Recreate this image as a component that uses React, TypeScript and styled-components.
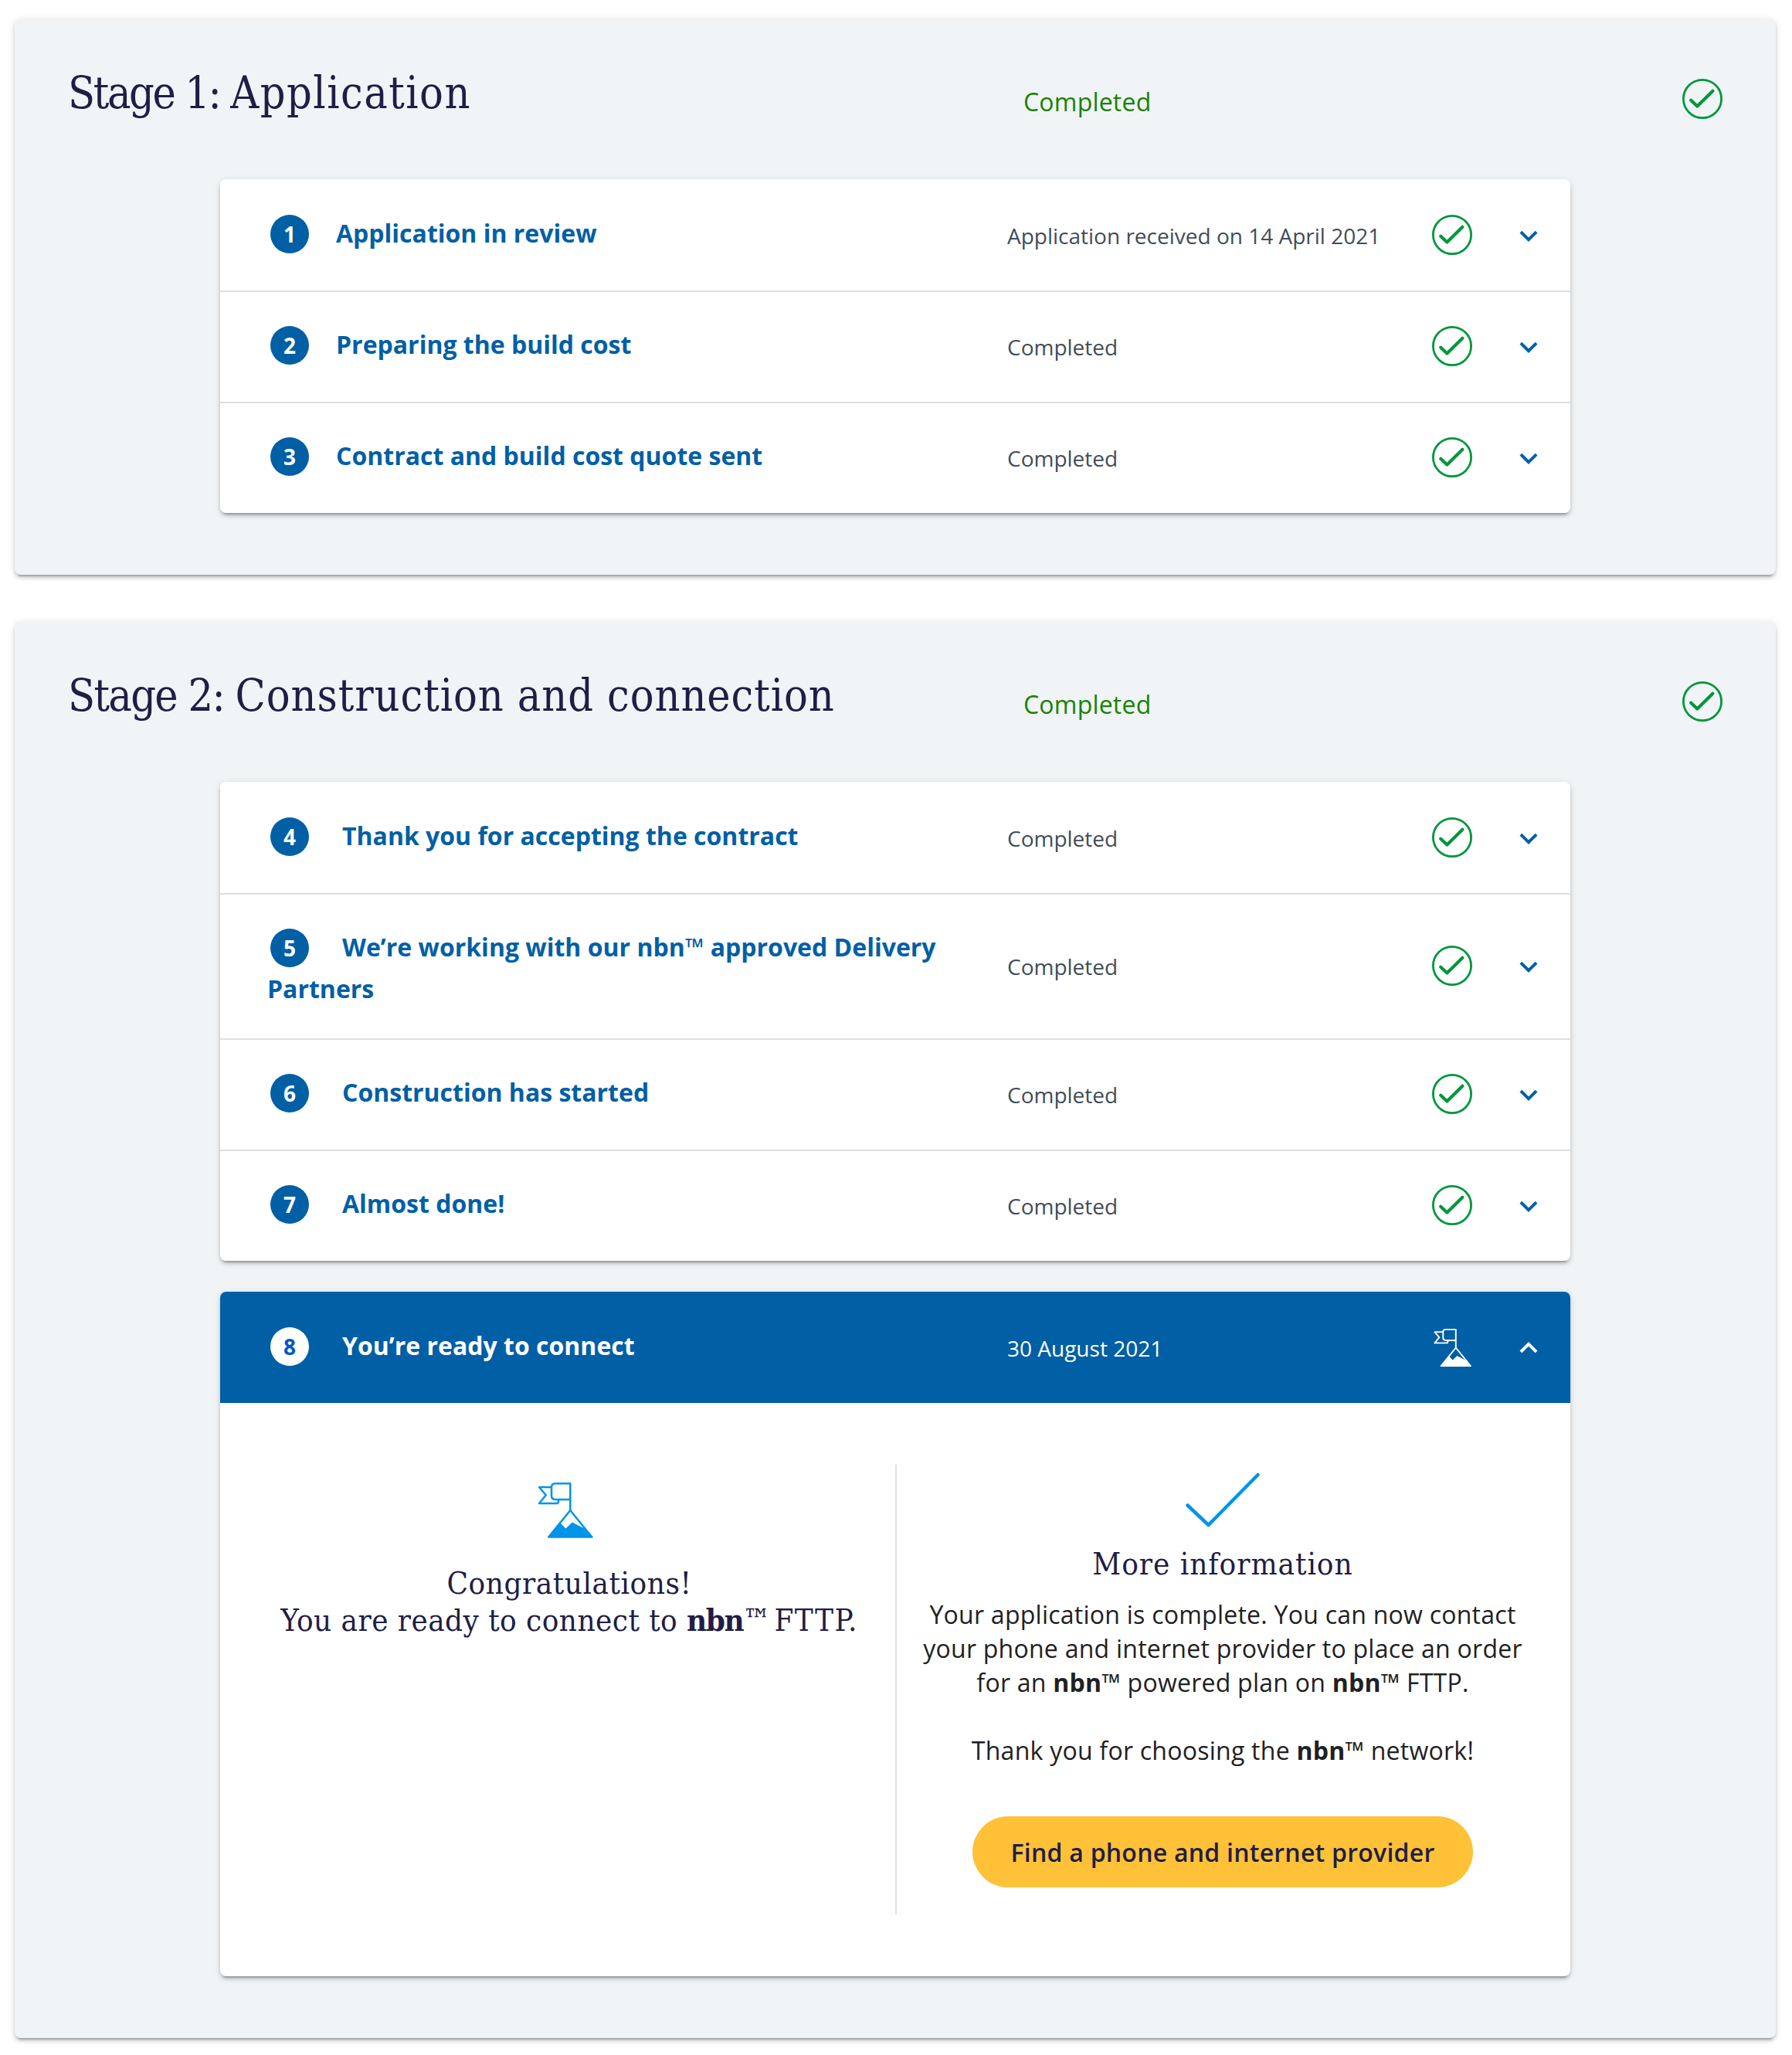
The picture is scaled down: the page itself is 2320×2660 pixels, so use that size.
import React from "react";
import styled, { createGlobalStyle, css } from "styled-components";

const Global = createGlobalStyle`
  * { box-sizing: border-box; }
  body { margin: 0; background: #fff; font-family: "Open Sans", sans-serif; }
`;

const slab = css`
  font-family: "Roboto Slab", "DejaVu Serif Condensed", "DejaVu Serif", serif;
  font-stretch: condensed;
  font-weight: 400;
  color: #211d45;
`;

const elevation = css`
  border-radius: 8px;
  box-shadow: 0 6px 2px -4px rgba(0, 0, 0, 0.2), 0 4px 4px 0 rgba(0, 0, 0, 0.14),
    0 2px 10px 0 rgba(0, 0, 0, 0.12);
`;

const Page = styled.main`
  display: flex;
  flex-direction: column;
  gap: 60px;
  padding: 24px 21px 22px 19px;
`;

const StageCard = styled.section`
  ${elevation}
  background: #f0f4f7;
  padding: 0 266px 80px;
`;

const StageHead = styled.header`
  display: flex;
  height: 208px;
  margin: 0 -266px;
  padding: 0 69px;
`;

const StageTitle = styled.h2`
  ${slab}
  width: 1237px;
  margin: 0;
  padding-top: 58px;
  font-size: 57px;
  line-height: 76px;
  white-space: nowrap;
`;

const Tracked = styled.span<{ $spacing: number }>`
  letter-spacing: ${(p) => p.$spacing}px;
`;

const StageStatus = styled.span`
  flex: 1;
  padding-top: 84px;
  font-size: 32px;
  line-height: 48px;
  letter-spacing: 0.2px;
  color: #1a8200;
`;

const StageIcon = styled.span`
  padding-top: 78px;
`;

const Panels = styled.div`
  display: flex;
  flex-direction: column;
  gap: 40px;
`;

const Panel = styled.div`
  ${elevation}
  overflow: hidden;
  background: #fff;
`;

const Row = styled.button<{ $open?: boolean }>`
  display: grid;
  grid-template-columns: 958px 1fr 52px 85px;
  align-items: center;
  width: 100%;
  min-height: 144px;
  margin: 0;
  padding: 0 42px 0 61px;
  border: 0;
  background: ${(p) => (p.$open ? "#005fa5" : "#fff")};
  color: ${(p) => (p.$open ? "#fff" : "#005fa5")};
  font-family: inherit;
  text-align: left;

  & + & {
    box-shadow: inset 0 2px 0 #dfdfdf;
  }
`;

const RowTitle = styled.span`
  align-self: start;
  width: 880px;
  padding: 43px 0 37px;
  font-size: 32px;
  font-weight: 700;
  line-height: 54px;
`;

const Badge = styled.span<{ $open?: boolean; $gap: number }>`
  display: inline-block;
  width: 50px;
  height: 50px;
  margin: 0 ${(p) => p.$gap}px 0 4px;
  border-radius: 50%;
  background: ${(p) => (p.$open ? "#fff" : "#005fa5")};
  color: ${(p) => (p.$open ? "#0056c7" : "#fff")};
  font-size: 28px;
  line-height: 50px;
  text-align: center;
`;

const RowStatus = styled.span<{ $open?: boolean }>`
  padding-top: 2px;
  font-size: 28px;
  line-height: 40px;
  color: ${(p) => (p.$open ? "#fff" : "#414d58")};
  white-space: nowrap;
`;

const IconCell = styled.span`
  display: flex;
  justify-content: center;
`;

const ArrowCell = styled.span<{ $open?: boolean }>`
  display: flex;
  justify-content: flex-end;
  padding-top: ${(p) => (p.$open ? 0 : 2)}px;
`;

const Details = styled.div`
  display: grid;
  grid-template-columns: 876px 1fr;
  height: 742px;
  padding: 80px 0;
`;

const Congrats = styled.div`
  padding: 23px 24px 0 54px;
  border-right: 2px solid #dfe1e6;
  text-align: center;
`;

const FlagWrap = styled.div`
  height: 106px;
  margin-left: -10px;
`;

const PanelHeading = styled.h3`
  ${slab}
  margin: 0;
  font-size: 40px;
  line-height: 48px;
  white-space: nowrap;

  b {
    font-weight: 700;
    letter-spacing: -1.5px;
  }
`;

const Info = styled.div`
  display: flex;
  flex-direction: column;
  align-items: center;
  padding: 9px 28px 0 0;
  text-align: center;
`;

const InfoTick = styled.svg`
  margin-bottom: 23px;
`;

const Copy = styled.p<{ $after: number }>`
  margin: 0 0 ${(p) => p.$after}px;
  color: #212121;
  font-size: 32px;
  line-height: 44px;
  letter-spacing: 0.25px;
  white-space: nowrap;
`;

const InfoHeading = styled(PanelHeading)`
  margin-bottom: 20px;
`;

const ProviderButton = styled.button`
  width: 648px;
  height: 92px;
  padding: 0;
  border: 0;
  border-radius: 46px;
  background: #ffc137;
  color: #211d45;
  font-family: inherit;
  font-size: 32px;
  font-weight: 600;
  letter-spacing: 0.24px;
  white-space: nowrap;
`;

const TickCircle = () => (
  <svg width="52" height="52" viewBox="0 0 52 52" fill="none" stroke="#00963c">
    <circle cx="26" cy="26" r="24.6" strokeWidth="2.8" />
    <path
      d="M11.2 27.8 L19.4 35.6 L39.4 15.8"
      strokeWidth="4.2"
      strokeLinecap="round"
      strokeLinejoin="round"
    />
  </svg>
);

const Chevron = ({ up, color }: { up?: boolean; color: string }) => (
  <svg width="24" height="15" viewBox="0 0 24 15" fill="none">
    <path
      d={up ? "M1.9 12.9 L12 2.9 L22.1 12.9" : "M1.9 2.1 L12 12.1 L22.1 2.1"}
      stroke={color}
      strokeWidth="4"
    />
  </svg>
);

const MountainFlag = ({ size, color, stroke }: { size: number; color: string; stroke: number }) => (
  <svg width={size} height={size} viewBox="0 0 72 72" fill="none">
    <g stroke={color} strokeWidth={stroke} strokeLinejoin="round">
      <path d="M42.3 36 V1.3 H23 Q18 1.3 18 6.3 V17 Q18 22 23 22 H42.3" />
      <path d="M18 6 H2 L10.8 16.2 L2 27 H24.5 Q27 27 27 24.5 V22" />
      <path d="M42.3 36 L70.4 70.6 H14.2 Z" />
    </g>
    <path d="M29.7 52.5 L36.4 59.6 L44.8 51.6 L59.5 59 L70.4 71 H14 Z" fill={color} />
  </svg>
);

type Step = { n: number; title: string; status: string };

const application: Step[] = [
  { n: 1, title: "Application in review", status: "Application received on 14 April 2021" },
  { n: 2, title: "Preparing the build cost", status: "Completed" },
  { n: 3, title: "Contract and build cost quote sent", status: "Completed" },
];

const construction: Step[] = [
  { n: 4, title: "Thank you for accepting the contract", status: "Completed" },
  { n: 5, title: "We’re working with our nbn™ approved Delivery Partners", status: "Completed" },
  { n: 6, title: "Construction has started", status: "Completed" },
  { n: 7, title: "Almost done!", status: "Completed" },
];

const StepRow = ({ step, open, gap }: { step: Step; open?: boolean; gap: number }) => (
  <Row $open={open}>
    <RowTitle>
      <Badge $open={open} $gap={gap}>
        {step.n}
      </Badge>
      {step.title}
    </RowTitle>
    <RowStatus $open={open}>{step.status}</RowStatus>
    <IconCell>
      {open ? <MountainFlag size={49} color="#fff" stroke={2.8} /> : <TickCircle />}
    </IconCell>
    <ArrowCell $open={open}>
      <Chevron up={open} color={open ? "#fff" : "#005fa5"} />
    </ArrowCell>
  </Row>
);

const Stage = ({
  label,
  labelSpacing,
  name,
  nameSpacing,
  children,
}: {
  label: string;
  labelSpacing: number;
  name: string;
  nameSpacing: number;
  children: React.ReactNode;
}) => (
  <StageCard>
    <StageHead>
      <StageTitle>
        <Tracked $spacing={labelSpacing}>{label} </Tracked>
        <Tracked $spacing={nameSpacing}>{name}</Tracked>
      </StageTitle>
      <StageStatus>Completed</StageStatus>
      <StageIcon>
        <TickCircle />
      </StageIcon>
    </StageHead>
    <Panels>{children}</Panels>
  </StageCard>
);

export default function App() {
  return (
    <>
      <Global />
      <Page>
        <Stage label="Stage 1:" labelSpacing={-2.4} name="Application" nameSpacing={1.45}>
          <Panel>
            {application.map((s) => (
              <StepRow key={s.n} step={s} gap={35} />
            ))}
          </Panel>
        </Stage>
        <Stage
          label="Stage 2:"
          labelSpacing={-1.7}
          name="Construction and connection"
          nameSpacing={0.9}
        >
          <Panel>
            {construction.map((s) => (
              <StepRow key={s.n} step={s} gap={43} />
            ))}
          </Panel>
          <Panel>
            <StepRow
              open
              gap={43}
              step={{ n: 8, title: "You’re ready to connect", status: "30 August 2021" }}
            />
            <Details>
              <Congrats>
                <FlagWrap>
                  <MountainFlag size={72} color="#0095e6" stroke={2.5} />
                </FlagWrap>
                <PanelHeading>
                  <Tracked $spacing={0.55}>Congratulations!</Tracked>
                  <br />
                  <Tracked $spacing={0.45}>You are ready to connect to </Tracked>
                  <b>nbn</b>
                  <Tracked $spacing={-3.5}>™ </Tracked>
                  <Tracked $spacing={1.4}>FTTP.</Tracked>
                </PanelHeading>
              </Congrats>
              <Info>
                <InfoTick width="96" height="72" viewBox="0 0 96 72" fill="none">
                  <path
                    d="M2.5 43.5 L29.5 69 L93.5 4"
                    stroke="#0095e6"
                    strokeWidth="4.5"
                    strokeLinecap="round"
                    strokeLinejoin="round"
                  />
                </InfoTick>
                <InfoHeading>
                  <Tracked $spacing={0.98}>More information</Tracked>
                </InfoHeading>
                <Copy $after={44}>
                  Your application is complete. You can now contact
                  <br />
                  your phone and internet provider to place an order
                  <br />
                  for an <b>nbn</b>™ powered plan on <b>nbn</b>™ FTTP.
                </Copy>
                <Copy $after={63}>
                  Thank you for choosing the <b>nbn</b>™ network!
                </Copy>
                <ProviderButton>Find a phone and internet provider</ProviderButton>
              </Info>
            </Details>
          </Panel>
        </Stage>
      </Page>
    </>
  );
}
